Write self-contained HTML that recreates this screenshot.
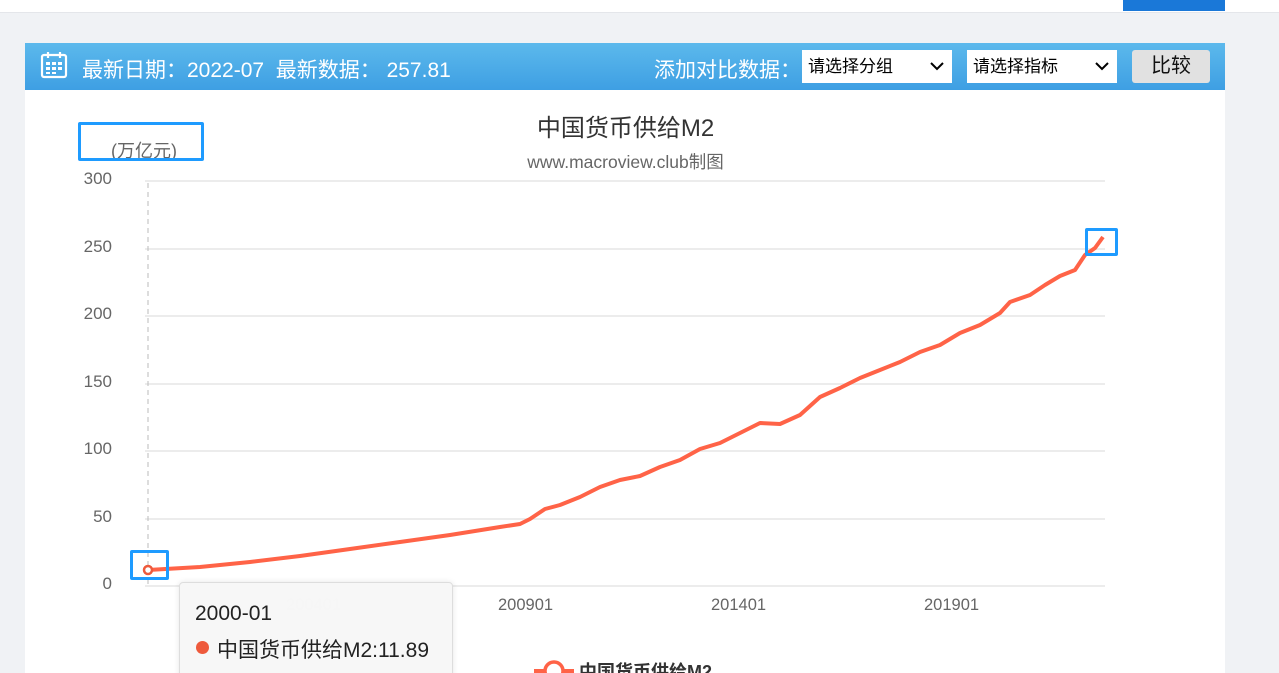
<!DOCTYPE html>
<html style="overflow:hidden;width:1279px;height:673px"><head><meta charset="utf-8"><style>
body{margin:0;width:1279px;height:673px;overflow:hidden;background:#f0f2f5;font-family:"Liberation Sans","Noto Sans CJK SC",sans-serif;position:relative}
.top{position:absolute;left:0;top:0;width:1279px;height:12px;background:#fff;border-bottom:1px solid #e4e6ea}
.tb{position:absolute;left:1123px;top:0;width:102px;height:11px;background:#1a78d8}
.hdr{position:absolute;left:25px;top:43px;width:1200px;height:47px;background:linear-gradient(#5cb9ec,#3e9fe3);color:#fff}
.panel{position:absolute;left:25px;top:90px;width:1200px;height:583px;background:#fff}
.sel{position:absolute;top:7px;height:33px;width:150px;background:#fff;color:#000;font-size:17px;line-height:33px;padding-left:6px;box-sizing:border-box}
.sel svg{position:absolute;right:8px;top:11px}
.btn{position:absolute;left:1107px;top:7px;width:78px;height:33px;background:#e1e1e1;border-radius:3px;color:#111;font-size:20px;line-height:33px;text-align:center}
.yl{position:absolute;width:40px;text-align:right;font-size:17px;color:#666}
.xl{position:absolute;font-size:16.5px;color:#666}
.box{position:absolute;border:3px solid #1e9bff;border-radius:2px;box-sizing:border-box}
</style></head><body>
<div class="top"></div><div class="tb"></div>
<div class="hdr">
<svg style="position:absolute;left:15px;top:8px" width="28" height="28" viewBox="0 0 28 28" fill="none" stroke="#fff" stroke-width="2.2"><rect x="2" y="4" width="24" height="22" rx="2"/><line x1="8" y1="1" x2="8" y2="7"/><line x1="20" y1="1" x2="20" y2="7"/><g fill="#fff" stroke="none"><rect x="6" y="11" width="4" height="3"/><rect x="12" y="11" width="4" height="3"/><rect x="18" y="11" width="4" height="3"/><rect x="6" y="16" width="4" height="3"/><rect x="12" y="16" width="4" height="3"/><rect x="18" y="16" width="4" height="3"/><rect x="6" y="21" width="4" height="2"/><rect x="12" y="21" width="4" height="2"/></g></svg>
<div style="position:absolute;left:57px;top:11px;font-size:21px;white-space:nowrap">最新日期：2022-07&nbsp;&nbsp;最新数据：&nbsp;257.81</div>
<div style="position:absolute;left:629px;top:11px;font-size:21px;white-space:nowrap">添加对比数据：</div>
<div class="sel" style="left:777px">请选择分组<svg width="14" height="10"><path d="M1 2l6 6 6-6" stroke="#000" stroke-width="2" fill="none"/></svg></div>
<div class="sel" style="left:942px">请选择指标<svg width="14" height="10"><path d="M1 2l6 6 6-6" stroke="#000" stroke-width="2" fill="none"/></svg></div>
<div class="btn">比较</div>
</div>
<div class="panel"></div>
<div style="position:absolute;left:0;top:108px;width:1251px;text-align:center;font-size:24px;color:#333">中国货币供给M2</div>
<div style="position:absolute;left:0;top:149px;width:1251px;text-align:center;font-size:17.5px;color:#666">www.macroview.club制图</div>
<div style="position:absolute;left:111px;top:137px;font-size:18px;color:#666">(万亿元)</div>
<div class="yl" style="left:72px;top:169px">300</div>
<div class="yl" style="left:72px;top:237px">250</div>
<div class="yl" style="left:72px;top:304px">200</div>
<div class="yl" style="left:72px;top:372px">150</div>
<div class="yl" style="left:72px;top:439px">100</div>
<div class="yl" style="left:72px;top:507px">50</div>
<div class="yl" style="left:72px;top:574px">0</div>
<svg style="position:absolute;left:0;top:0" width="1279" height="673">
<g stroke="#e6e6e6" stroke-width="1.5"><line x1="145" y1="181" x2="1105" y2="181"/><line x1="145" y1="249" x2="1105" y2="249"/><line x1="145" y1="316" x2="1105" y2="316"/><line x1="145" y1="384" x2="1105" y2="384"/><line x1="145" y1="451" x2="1105" y2="451"/><line x1="145" y1="519" x2="1105" y2="519"/><line x1="145" y1="586" x2="1105" y2="586"/></g>
<line x1="148" y1="183" x2="148" y2="586" stroke="#bbb" stroke-dasharray="5,4"/>
<polyline fill="none" stroke="#ff6347" stroke-width="4" stroke-linejoin="round" points="148,570 200,567 250,562 300,556 350,549 400,542 450,535 500,527 520,524 530,519 545,509 560,505 580,497 600,487 620,480 640,476 660,467 680,460 700,449 720,443 740,433 760,423 780,424 800,415 820,397 840,388 860,378 880,370 900,362 920,352 940,345 960,333 980,325 1000,313 1010,302 1030,295 1045,285 1060,276 1075,270 1085,255 1095,248 1103,237"/>
<circle cx="148" cy="570" r="4" fill="#fff" stroke="#ee5a3c" stroke-width="2.5"/>
<rect x="534" y="669" width="40" height="4" fill="#ff6347"/><circle cx="554" cy="671" r="9" fill="#fff" stroke="#ff6347" stroke-width="3.5"/>
</svg>
<div class="box" style="left:78px;top:122px;width:126px;height:39px"></div>
<div class="box" style="left:130px;top:550px;width:39px;height:30px"></div>
<div class="box" style="left:1085px;top:228px;width:33px;height:28px"></div>
<div class="xl" style="left:286px;top:596px;color:#ccc">200401</div>
<div class="xl" style="left:498px;top:596px">200901</div>
<div class="xl" style="left:711px;top:596px">201401</div>
<div class="xl" style="left:924px;top:596px">201901</div>
<div style="position:absolute;left:579px;top:658px;font-size:18px;font-weight:bold;color:#333">中国货币供给M2</div>
<div style="position:absolute;left:179px;top:582px;width:272px;height:100px;background:rgba(247,247,247,.97);border:1px solid #ddd;border-radius:4px;box-shadow:0 0 6px rgba(0,0,0,.1)">
<div style="position:absolute;left:15px;top:19px;font-size:21px;color:#222">2000-01</div>
<div style="position:absolute;left:16px;top:58px;width:13px;height:13px;border-radius:50%;background:#ee5a3c"></div>
<div style="position:absolute;left:37px;top:51px;font-size:21px;color:#222">中国货币供给M2:11.89</div>
</div>
</body></html>
